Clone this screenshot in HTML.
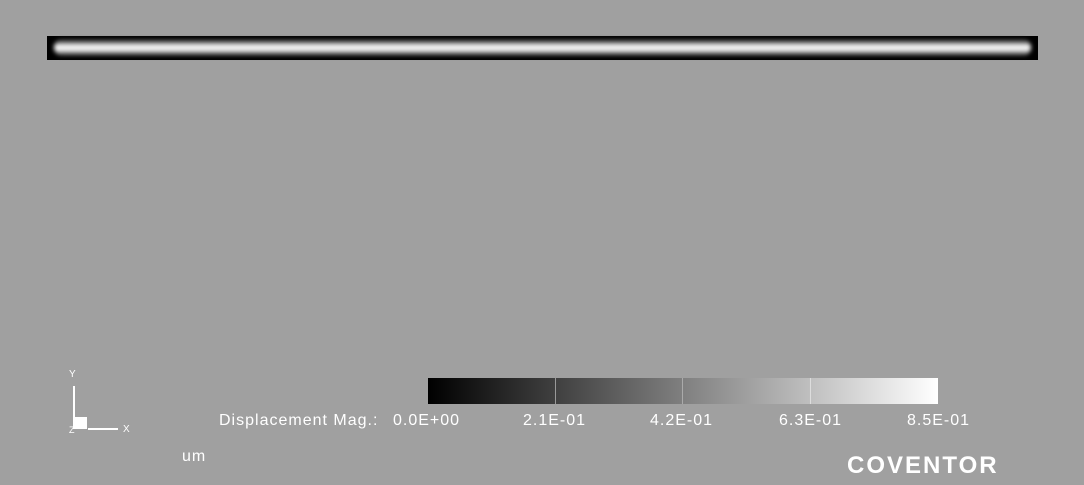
<!DOCTYPE html>
<html><head><style>
body{margin:0;width:1084px;height:485px;background:#a0a0a0;position:relative;overflow:hidden;font-family:"Liberation Sans",sans-serif;color:#fff}
.a{position:absolute}
.t{font-size:16px;letter-spacing:1px;top:412px}
</style></head><body>
<div class="a" style="left:47px;top:36px;width:991px;height:24px;background:#000"></div>
<div class="a" style="left:54px;top:39px;width:977px;height:17px;border-radius:9px;background:linear-gradient(#111,#777 20%,#f4f4f4 40%,#fff 60%,#777 85%,#111);filter:blur(2px)"></div>
<div class="a" style="left:428px;top:378px;width:510px;height:26px;background:linear-gradient(90deg,#000,#fff)"></div>
<div class="a" style="left:555px;top:378px;width:1px;height:26px;background:#999"></div>
<div class="a" style="left:682px;top:378px;width:1px;height:26px;background:#aaa"></div>
<div class="a" style="left:810px;top:378px;width:1px;height:26px;background:#ddd"></div>
<div class="a t" style="left:219px">Displacement Mag.:</div>
<div class="a t" style="left:393px">0.0E+00</div>
<div class="a t" style="left:523px">2.1E-01</div>
<div class="a t" style="left:650px">4.2E-01</div>
<div class="a t" style="left:779px">6.3E-01</div>
<div class="a t" style="left:907px">8.5E-01</div>
<div class="a" style="left:182px;top:448px;font-size:16px;letter-spacing:1px">um</div>
<div class="a" style="left:847px;top:452px;font-size:24px;font-weight:bold;letter-spacing:2px">COVENTOR</div>
<div class="a" style="left:69px;top:369px;font-size:10px">Y</div>
<div class="a" style="left:73px;top:386px;width:2px;height:43px;background:#fff"></div>
<div class="a" style="left:75px;top:417px;width:12px;height:12px;background:#fff"></div>
<div class="a" style="left:88px;top:428px;width:30px;height:2px;background:#fff"></div>
<div class="a" style="left:123px;top:424px;font-size:10px">X</div>
<div class="a" style="left:69px;top:425px;font-size:9px">Z</div>
</body></html>
